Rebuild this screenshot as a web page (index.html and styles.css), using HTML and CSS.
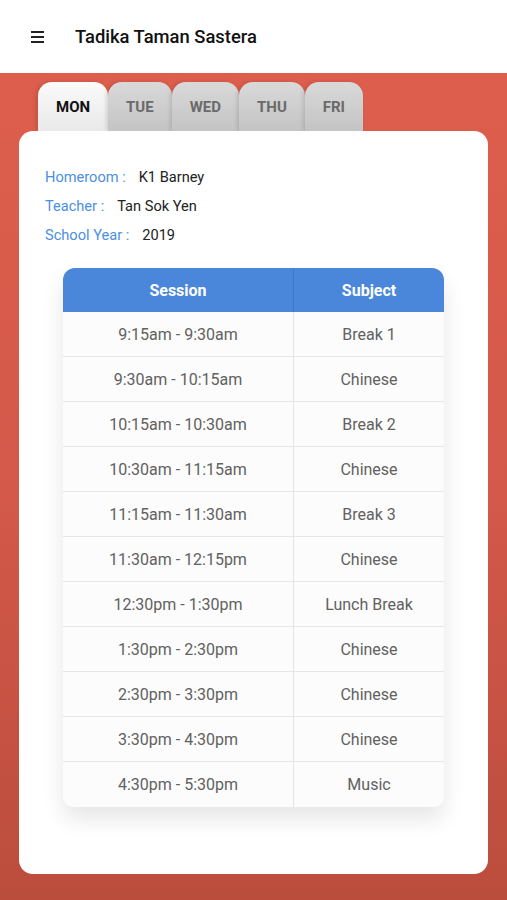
FILE: index.html
```html
<!DOCTYPE html>
<html lang="en">
	<head>
		<meta charset="UTF-8" />
		<title>Tadika Taman Sastera</title>
		<link rel="stylesheet" href="styles.css">
	</head>
	<body>
		<header class="topbar">
			<span class="menu-icon"><i></i><i></i><i></i></span>
			<h1 class="title">Tadika Taman Sastera</h1>
		</header>

		<main class="page">
			<nav class="tabs">
				<div class="tab active">MON</div>
				<div class="tab">TUE</div>
				<div class="tab">WED</div>
				<div class="tab">THU</div>
				<div class="tab">FRI</div>
			</nav>

			<section class="card">
				<div class="info">
					<div class="info-row"><span class="label">Homeroom :</span><span class="value">K1 Barney</span></div>
					<div class="info-row"><span class="label">Teacher :</span><span class="value">Tan Sok Yen</span></div>
					<div class="info-row"><span class="label">School Year :</span><span class="value">2019</span></div>
				</div>

				<table class="timetable">
					<thead>
						<tr><th>Session</th><th>Subject</th></tr>
					</thead>
					<tbody>
						<tr><td>9:15am - 9:30am</td><td>Break 1</td></tr>
						<tr><td>9:30am - 10:15am</td><td>Chinese</td></tr>
						<tr><td>10:15am - 10:30am</td><td>Break 2</td></tr>
						<tr><td>10:30am - 11:15am</td><td>Chinese</td></tr>
						<tr><td>11:15am - 11:30am</td><td>Break 3</td></tr>
						<tr><td>11:30am - 12:15pm</td><td>Chinese</td></tr>
						<tr><td>12:30pm - 1:30pm</td><td>Lunch Break</td></tr>
						<tr><td>1:30pm - 2:30pm</td><td>Chinese</td></tr>
						<tr><td>2:30pm - 3:30pm</td><td>Chinese</td></tr>
						<tr><td>3:30pm - 4:30pm</td><td>Chinese</td></tr>
						<tr><td>4:30pm - 5:30pm</td><td>Music</td></tr>
					</tbody>
				</table>
			</section>
		</main>
	</body>
</html>
```

FILE: styles.css
```css
body {
	margin: 0;
	padding: 0;
	font-family: Roboto, 'Liberation Sans', sans-serif;
	background: #b94c3c;
	color: #222;
}

.topbar {
	height: 73px;
	background: #fff;
	display: flex;
	align-items: center;
	padding-left: 31px;
	box-sizing: border-box;
}

.menu-icon {
	display: flex;
	flex-direction: column;
	gap: 3px;
	width: 13px;
	margin-right: 31px;
}

.menu-icon i {
	display: block;
	height: 2px;
	background: #222;
}

.title {
	margin: 0;
	font-size: 18.4px;
	font-weight: 500;
	color: #111;
}

.page {
	height: 827px;
	box-sizing: border-box;
	padding: 9px 19px 26px;
	background: linear-gradient(180deg, #dd5e4c 0%, #d4594a 50%, #bb4d3d 100%);
	display: flex;
	flex-direction: column;
}

.tabs {
	display: flex;
	margin-left: 19px;
	height: 49px;
}

.tab {
	padding: 0 18px;
	line-height: 50px;
	font-size: 15px;
	font-weight: 700;
	color: #6a6a6a;
	background: linear-gradient(180deg, #d9d9d9, #c4c4c4);
	border-radius: 14px 14px 0 0;
	box-shadow: -2px 0 4px rgba(0, 0, 0, 0.12);
}

.tab.active {
	color: #111;
	background: linear-gradient(180deg, #fafafa, #e9e9e9);
}

.card {
	flex: 1;
	background: #fff;
	border-radius: 14px;
	padding: 32px 44px 0 26px;
}

.info-row {
	display: flex;
	gap: 13px;
	height: 29px;
	line-height: 29px;
	font-size: 14.6px;
}

.label {
	color: #4a90e2;
}

.value {
	color: #222;
}

.timetable {
	margin: 18px 0 0 18px;
	width: 381px;
	border-collapse: separate;
	border-spacing: 0;
	border-radius: 12px;
	box-shadow: 0 12px 22px rgba(0, 0, 0, 0.1);
	font-size: 16px;
}

.timetable th {
	height: 44px;
	background: #4a87db;
	color: #fff;
	font-weight: 700;
	padding: 0;
}

.timetable th:first-child {
	width: 230px;
	border-radius: 12px 0 0 0;
	border-right: 1px solid #3f79c8;
}

.timetable th:last-child {
	border-radius: 0 12px 0 0;
}

.timetable td {
	height: 44px;
	padding: 0;
	text-align: center;
	color: #616161;
	background: #fcfcfc;
	border-bottom: 1px solid #e6e6e6;
}

.timetable td:first-child {
	border-right: 1px solid #e4e4e4;
}

.timetable tr:last-child td {
	border-bottom: none;
	height: 45px;
}

.timetable tr:last-child td:first-child {
	border-radius: 0 0 0 10px;
}

.timetable tr:last-child td:last-child {
	border-radius: 0 0 10px 0;
}
```
